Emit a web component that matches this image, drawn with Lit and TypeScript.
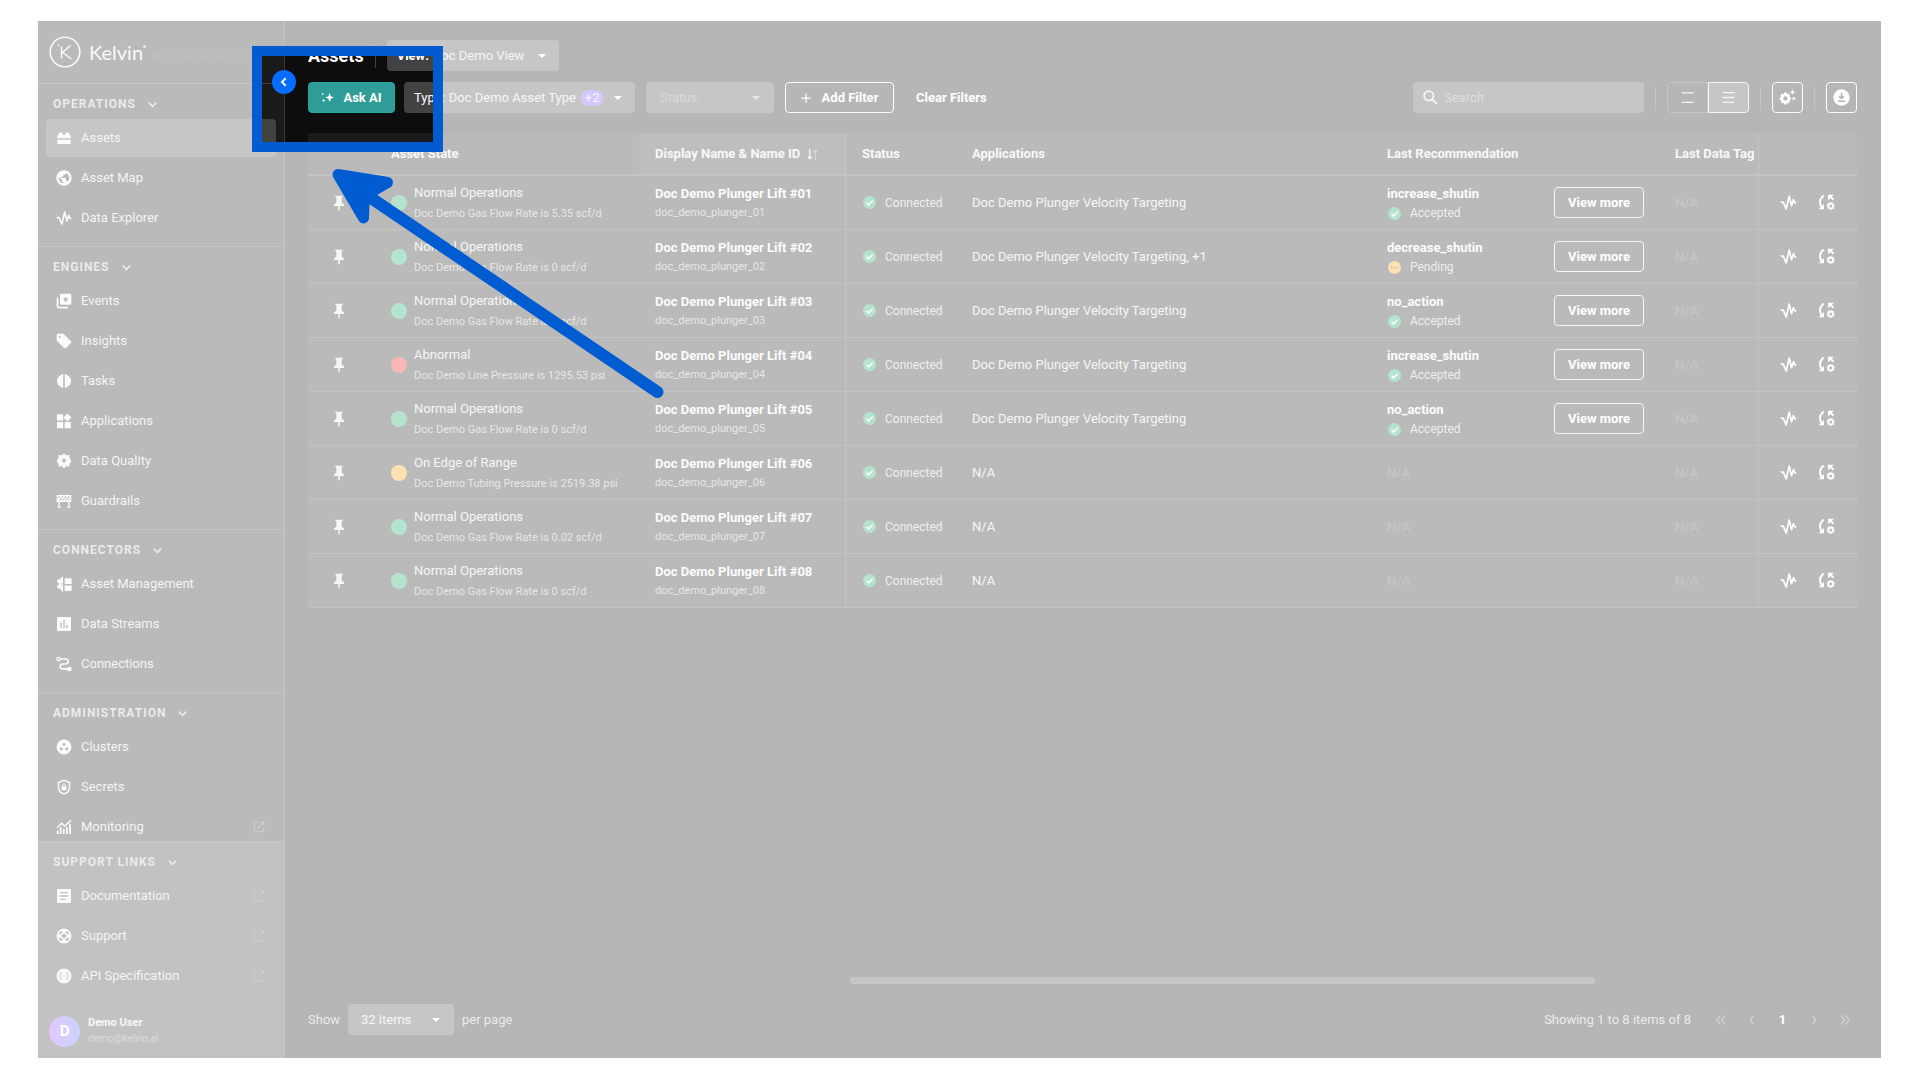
import { LitElement, html, css, svg, nothing } from "lit";
import { customElement, property, state } from "lit/decorators.js";
import { classMap } from "lit/directives/class-map.js";

const star = "l1.2 2.5 2.8.4-2 2 .5 2.8-2.5-1.3-2.5 1.3.5-2.8-2-2 2.8-.4z";

const icons: Record<string, unknown> = {
  brick: svg`<path d="M2 12.300V8.500a1 1 0 0 1 1-1h1V5a1 1 0 0 1 1-1h4a1 1 0 0 1 1 1v2.500h4V5a1 1 0 0 1 1-1h4a1 1 0 0 1 1 1v2.500h1a1 1 0 0 1 1 1v3.800zM2 14.500h20v5.500a1 1 0 0 1-1 1H3a1 1 0 0 1-1-1z"/>`,
  globe: svg`<path d="M17.900 17.390c-.26-.8-1.010-1.390-1.900-1.390h-1v-3a1 1 0 0 0-1-1H8v-2h2a1 1 0 0 0 1-1V7h2a2 2 0 0 0 2-2v-.41a7.984 7.984 0 0 1 2.900 12.800M11 19.930c-3.950-.49-7-3.850-7-7.930 0-.62.08-1.220.21-1.790L9 15v1a2 2 0 0 0 2 2M12 .5A11.500 11.500 0 0 0 .5 12a11.500 11.500 0 0 0 11.500 11.500A11.500 11.500 0 0 0 23.500 12 11.500 11.500 0 0 0 12 .5z"/>`,
  wave: svg`<path d="M1 11.500h3.500L8.800 21 13 3l3.300 13.500L19 8l2 4.500h2" fill="none" stroke="currentColor" stroke-width="2.400" stroke-linejoin="round"/>`,
  events: svg`<path d="M8 1h13a2 2 0 0 1 2 2v12.500a2 2 0 0 1-2 2H8a2 2 0 0 1-2-2V3a2 2 0 0 1 2-2zm6.500 4.500${star}" fill-rule="evenodd"/><path d="M2.300 7v12.500a2.500 2.500 0 0 0 2.500 2.500H18" fill="none" stroke="currentColor" stroke-width="2.600"/>`,
  tag: svg`<path d="M5.500 7A1.500 1.500 0 0 1 4 5.500 1.500 1.500 0 0 1 5.500 4 1.500 1.500 0 0 1 7 5.500 1.500 1.500 0 0 1 5.500 7m16.900 5.500-10.500-10.500C11.500 1.300 11 1 10.400 1H3C1.900 1 1 1.900 1 3v7.400c0 .6.200 1.100.6 1.500l10.500 10.500c.8.800 2 .8 2.800 0l7.500-7.400c.8-.8.8-1.900 0-2.500z"/>`,
  tasks: svg`<path d="M10.800 1.500v21L7.500 21.500 3.500 18 1.500 14V10l2-4 4-3.500zM13.200 1.500v21l3.300-1 4-3.500 2-4V10l-2-4-4-3.500z"/>`,
  widgets: svg`<path d="M13 13.500v9.300h9.300v-9.300zM1.500 22.800h9.300v-9.300H1.500zM1.500 2v9.300h9.300V2zM17.200.8 11.200 6.800l6 6 6-6z"/>`,
  quality: svg`<path d="M12 .8l3.300 2.700 4.600-.6.600 4.500L23.300 12l-2.800 3.700-.6 4.500-4.600-.6L12 23.200l-3.300-3.600-4.600.6-.6-4.500L.8 12l2.700-4.600.6-4.500 4.600.6zM12 7${star}" fill-rule="evenodd" stroke-linejoin="round"/>`,
  barrier: svg`<path d="M1 3h22v10.500H1zM4 11.500h1.500l6-6.500H9.500zM8.500 11.500H10l6-6.500h-2zM13 11.500h1.500l6-6.500h-2zM2.500 9l3.500-4H3.500L2.500 6.500zM18 11.500h1.500L21.500 9V7.200z" fill-rule="evenodd"/><path d="M4.500 13v8M19.500 13v8M2.500 21.300h4.500M17 21.300h4.500" stroke="currentColor" stroke-width="2"/>`,
  management: svg`<path d="M10.500 1v22.500L7.500 22.500 7 18.800 3.500 19.500 1 15.500 4 13.500v-3L1 8.500l2.500-4L7 5.200 7.500 2zM8.500 9.500a3 3 0 0 0 0 5z" fill-rule="evenodd"/><path d="M13 12V4.500L15 2.500h2v2h2v-2h2l2.500 2V12zM13 14.300h10.500V21a1.500 1.500 0 0 1-1.500 1.500h-9z"/>`,
  poll: svg`<path d="M20.500 1.500h-17c-1.100 0-2 .9-2 2v17c0 1.100.9 2 2 2h17c1.100 0 2-.9 2-2v-17c0-1.100-.9-2-2-2zM8.500 18h-2v-8h2zm4.500 0h-2V6h2zm4.500 0h-2v-4.500h2z"/>`,
  route: svg`<circle cx="4" cy="4.500" r="2.500" fill="none" stroke="currentColor" stroke-width="2"/><circle cx="20" cy="19.500" r="3.500"/><path d="M7 4.500h7.500a3.700 3.700 0 0 1 0 7.400H10a3.700 3.700 0 0 0 0 7.400h7" fill="none" stroke="currentColor" stroke-width="2.400"/>`,
  clusters: svg`<path d="M12 .8A11.200 11.200 0 1 0 12 23.200 11.200 11.200 0 1 0 12 .8zM12 6a2.200 2.200 0 1 1 0 4.400A2.200 2.200 0 1 1 12 6zM8 12.800a2.200 2.200 0 1 1 0 4.400 2.200 2.200 0 1 1 0-4.400zm8 0a2.200 2.200 0 1 1 0 4.400 2.200 2.200 0 1 1 0-4.400z" fill-rule="evenodd"/>`,
  shield: svg`<path d="M12 2 3.800 5.200V12c0 5 3.400 9 8.200 10.300 4.800-1.300 8.200-5.300 8.200-10.300V5.200z" fill="none" stroke="currentColor" stroke-width="2.200" stroke-linejoin="round"/><path d="M8.500 10.800h7v6h-7z"/><path d="M10 11V9.300a2 2 0 0 1 4 0V11" fill="none" stroke="currentColor" stroke-width="1.500"/>`,
  monitoring: svg`<path d="M1.500 13 8.500 6.500l4.500 4L22.500 2" fill="none" stroke="currentColor" stroke-width="2.200"/><path d="M2.500 22.500v-5M7 22.500V12M11.700 22.500V15M16.300 22.500V12M21 22.500V7" stroke="currentColor" stroke-width="2.600"/>`,
  article: svg`<path d="M20.500 1.500h-17c-1.100 0-2 .9-2 2v17c0 1.100.9 2 2 2h17c1.100 0 2-.9 2-2v-17c0-1.100-.9-2-2-2zM14 18H6v-2h8zm4-5H6v-2h12zm0-5H6V6h12z"/>`,
  support: svg`<path d="M12 .8A11.200 11.200 0 1 0 12 23.200 11.200 11.200 0 1 0 12 .8zM12 8.500a3.500 3.500 0 1 1 0 7 3.500 3.500 0 1 1 0-7zM9.300 3.600v3.600A6 6 0 0 0 7.200 9.300H3.600a9 9 0 0 1 5.700-5.700zm5.400 0a9 9 0 0 1 5.700 5.700h-3.600a6 6 0 0 0-2.100-2.100zM3.600 14.700h3.600a6 6 0 0 0 2.100 2.100v3.600a9 9 0 0 1-5.700-5.700zm13.200 0h3.600a9 9 0 0 1-5.700 5.700v-3.600a6 6 0 0 0 2.100-2.100z" fill-rule="evenodd"/>`,
  api: svg`<circle cx="12" cy="12" r="11.200"/><path class="ink" d="M8.500 6.500C6 6.500 7.500 11 4.800 12c2.700 1 1.200 5.500 3.700 5.500M15.500 6.500c2.500 0 1 4.500 3.700 5.500-2.700 1-1.200 5.500-3.700 5.500M8.500 12h1.500M11.300 12h1.500M14.100 12h1.500" fill="none" stroke-width="1.500"/>`,
  external: svg`<path d="M20.500 20.500h-17v-17h7v-2h-7a2 2 0 0 0-2 2v17a2 2 0 0 0 2 2h17c1.100 0 2-.9 2-2v-7h-2zM14 1.500v2h5L8 14.500l1.400 1.400L20.500 5v5h2V1.500z"/>`,
  pin: svg`<path d="M16 11.500V3.500h1.500V1h-11v2.500H8v8L4.500 14v2.500h6.300V23h2.400v-6.500h6.300V14z"/>`,
  down: svg`<path d="M2 7l10 10L22 7" fill="none" stroke="currentColor" stroke-width="4"/>`,
  left: svg`<path d="M16 3 7 12l9 9" fill="none" stroke="currentColor" stroke-width="4.500"/>`,
  caret: svg`<path d="M0 6h24L12 18z"/>`,
  check: svg`<path d="M12 0a12 12 0 1 0 0 24 12 12 0 1 0 0-24z"/><path d="M6.500 12.500l3.800 3.800 7.400-7.400" fill="none" stroke="#fff" stroke-width="2.800"/>`,
  dots: svg`<path d="M12 0a12 12 0 1 0 0 24 12 12 0 1 0 0-24z"/><path d="M5 12h3M10.500 12h3M16 12h3" stroke="#333" stroke-width="2.600"/>`,
  search: svg`<path d="M14.800 14.800 22.500 22.500M16.800 9.300a7.500 7.500 0 1 1-15 0 7.500 7.500 0 0 1 15 0z" fill="none" stroke="currentColor" stroke-width="2.800"/>`,
  plus: svg`<path d="M12 1v22M1 12h22" stroke="currentColor" stroke-width="3"/>`,
  sparkle: svg`<path d="M16 3.500l2.300 6.200 5.700 2.300-5.700 2.300L16 20.500l-2.300-6.200L8 12l5.700-2.300zM5 14l1 2.500 2.500 1-2.500 1L5 21l-1-2.500-2.500-1 2.500-1zM3 3l.8 1.700 1.700.8-1.700.8L3 8l-.8-1.700L.5 5.500l1.700-.8z"/>`,
  sort: svg`<path d="M7 2v17M3.500 16 7 20l3.500-4" fill="none" stroke="currentColor" stroke-width="2.400"/><path d="M17.500 22V5M14 8l3.500-4L21 8" fill="none" stroke="currentColor" stroke-width="2" opacity=".4"/>`,
  two: svg`<path d="M1 3.500h22M1 21h22" stroke="currentColor" stroke-width="2.500"/>`,
  three: svg`<path d="M1 3h22M1 12h22M1 21h22" stroke="currentColor" stroke-width="2.500"/>`,
  gear: svg`<path d="M7.500 5h3l.8 2.300 2.200-.8 2 2.200-.9 2.200 2.200 1v3l-2.200 1 .9 2.200-2 2.200-2.200-.8-.8 2.300h-3l-.8-2.300-2.200.8-2-2.200.9-2.200L1 15v-3l1.900-1-.9-2.200 2-2.200 2.200.8zM9 10.300a3 3 0 1 0 0 6 3 3 0 1 0 0-6z" fill-rule="evenodd"/><path d="M19 .5l1.200 2.900 2.800 1.100-2.800 1.200L19 8.500l-1.200-2.800L15 4.500l2.800-1.100zM21 10.500l.9 2 2.100.9-2.100.9-.9 2.200-.9-2.200-2.100-.9 2.100-.9z"/>`,
  download: svg`<circle cx="12" cy="12" r="11.500"/><path class="ink" d="M12 5.500V13M8.500 10l3.500 3.500 3.500-3.500M7 17.300h10" fill="none" stroke-width="2.200"/>`,
  control: svg`<path d="M8 2C2.500 6.500 1.500 12.500 5 18.500" fill="none" stroke="currentColor" stroke-width="2.600"/><path d="M1 21.500h7.500V14z"/><path d="M14 1h8.500l-3 2.800 3.300 3.200-2 2-3.300-3.300L14.500 9z"/><path d="M18 10.800l1.500 2 2.500-.3.200 2.500 1.800 1.500-1.600 1.800V21l-2.500-.2-1.900 2.200-1.800-2.200-2.400.2-.2-2.500L12 16.700l1.600-1.700.2-2.500 2.500.3zM18 14.700a2.200 2.200 0 1 0 0 4.400 2.200 2.200 0 1 0 0-4.400z" fill-rule="evenodd"/>`,
};

const icon = (name: string, cls = "") =>
  html`<svg class="icon ${cls}" viewBox="0 0 24 24" fill="currentColor" aria-hidden="true">${icons[name]}</svg>`;

type NavItem = { label: string; icon: string; external?: boolean };
type NavGroup = { title: string; items: NavItem[] };

const groups: NavGroup[] = [
  {
    title: "OPERATIONS",
    items: [
      { label: "Assets", icon: "brick" },
      { label: "Asset Map", icon: "globe" },
      { label: "Data Explorer", icon: "wave" },
    ],
  },
  {
    title: "ENGINES",
    items: [
      { label: "Events", icon: "events" },
      { label: "Insights", icon: "tag" },
      { label: "Tasks", icon: "tasks" },
      { label: "Applications", icon: "widgets" },
      { label: "Data Quality", icon: "quality" },
      { label: "Guardrails", icon: "barrier" },
    ],
  },
  {
    title: "CONNECTORS",
    items: [
      { label: "Asset Management", icon: "management" },
      { label: "Data Streams", icon: "poll" },
      { label: "Connections", icon: "route" },
    ],
  },
  {
    title: "ADMINISTRATION",
    items: [
      { label: "Clusters", icon: "clusters" },
      { label: "Secrets", icon: "shield" },
      { label: "Monitoring", icon: "monitoring", external: true },
    ],
  },
];

const supportGroup: NavGroup = {
  title: "SUPPORT LINKS",
  items: [
    { label: "Documentation", icon: "article", external: true },
    { label: "Support", icon: "support", external: true },
    { label: "API Specification", icon: "api", external: true },
  ],
};

type Asset = {
  level: "ok" | "bad" | "edge";
  state: string;
  detail: string;
  apps: string;
  action?: string;
  result?: "Accepted" | "Pending";
};

const targeting = "Doc Demo Plunger Velocity Targeting";
const assets: Asset[] = [
  { level: "ok", state: "Normal Operations", detail: "Doc Demo Gas Flow Rate is 5.35 scf/d", apps: targeting, action: "increase_shutin", result: "Accepted" },
  { level: "ok", state: "Normal Operations", detail: "Doc Demo Gas Flow Rate is 0 scf/d", apps: `${targeting}, +1`, action: "decrease_shutin", result: "Pending" },
  { level: "ok", state: "Normal Operations", detail: "Doc Demo Gas Flow Rate is 0 scf/d", apps: targeting, action: "no_action", result: "Accepted" },
  { level: "bad", state: "Abnormal", detail: "Doc Demo Line Pressure is 1295.53 psi", apps: targeting, action: "increase_shutin", result: "Accepted" },
  { level: "ok", state: "Normal Operations", detail: "Doc Demo Gas Flow Rate is 0 scf/d", apps: targeting, action: "no_action", result: "Accepted" },
  { level: "edge", state: "On Edge of Range", detail: "Doc Demo Tubing Pressure is 2519.38 psi", apps: "N/A" },
  { level: "ok", state: "Normal Operations", detail: "Doc Demo Gas Flow Rate is 0.02 scf/d", apps: "N/A" },
  { level: "ok", state: "Normal Operations", detail: "Doc Demo Gas Flow Rate is 0 scf/d", apps: "N/A" },
];

const shared = css`
  * {
    box-sizing: border-box;
  }
  .icon {
    width: 16px;
    height: 16px;
    flex: none;
    display: block;
  }
  button,
  select,
  input {
    font: inherit;
    color: inherit;
    margin: 0;
    padding: 0;
    border: 0;
    background: none;
    outline: none;
  }
  button {
    display: inline-flex;
    align-items: center;
    justify-content: center;
    cursor: pointer;
    white-space: nowrap;
  }
  a {
    color: inherit;
    text-decoration: none;
  }
`;

@customElement("side-bar")
class SideBar extends LitElement {
  static styles = [
    shared,
    css`
      :host {
        position: relative;
        display: flex;
        flex-direction: column;
        flex: none;
        width: 247px;
        background: #1a1a1a;
        border-right: 1px solid #3a3a3a;
        color: #dcdcdc;
      }
      .brand {
        display: flex;
        align-items: center;
        flex: none;
        height: 63px;
        padding-left: 11px;
        border-bottom: 1px solid #404040;
      }
      .mark {
        width: 32px;
        height: 32px;
        margin-right: 8px;
      }
      .wordmark {
        font-family: Lato, sans-serif;
        font-size: 20px;
        line-height: 32px;
        color: #e8e8e8;
      }
      .ring {
        width: 3px;
        height: 3px;
        margin-bottom: 12px;
        border-radius: 50%;
        background: #c0c0c0;
      }
      .env {
        margin: 9px 0 0 5px;
        font-size: 10px;
        line-height: 12px;
        color: #2b2b2b;
        white-space: nowrap;
      }
      .collapse {
        position: absolute;
        top: 49px;
        right: -12px;
        z-index: 1;
        width: 24px;
        height: 24px;
        border-radius: 50%;
        background: #086cff;
        color: #fff;
      }
      .collapse .icon {
        width: 10px;
        height: 10px;
      }
      nav {
        flex: 1;
        min-height: 0;
        overflow: hidden;
      }
      .group {
        padding: 8px 8px 9px;
        border-bottom: 1px solid #3a3a3a;
      }
      .heading {
        height: 24px;
        margin: 0 0 3px;
        padding-left: 7px;
        font-size: 12px;
        line-height: 24px;
        font-weight: 700;
      }
      .heading button {
        gap: 12px;
        letter-spacing: 1px;
        color: #bdbdbd;
      }
      .heading .icon {
        width: 9px;
        height: 9px;
      }
      ul {
        display: flex;
        flex-direction: column;
        gap: 2px;
        list-style: none;
        margin: 0;
        padding: 0;
      }
      .link {
        display: flex;
        align-items: center;
        gap: 9px;
        height: 38px;
        padding: 0 11px 0 10px;
        border-radius: 4px;
      }
      .link .icon {
        color: #f2f2f2;
      }
      .link .ink {
        stroke: #333;
      }
      .link.current {
        background: #424242;
      }
      .link span {
        flex: 1;
      }
      .link .out {
        width: 12px;
        height: 12px;
        color: #606060;
      }
      footer {
        flex: none;
        background: #343434;
        border-top: 1px solid #404040;
      }
      footer .group {
        padding-bottom: 8px;
        border-color: #404040;
      }
      .user {
        display: flex;
        align-items: center;
        gap: 8px;
        height: 54px;
        padding-left: 11px;
      }
      .avatar {
        display: grid;
        place-items: center;
        width: 31px;
        height: 31px;
        border-radius: 50%;
        background: linear-gradient(90deg, #9b45f8, #4a6fff);
        color: #fff;
        font-size: 15px;
        font-weight: 700;
      }
      .who {
        font-size: 11px;
        line-height: 16px;
      }
      .who strong {
        display: block;
        color: #e6e6e6;
      }
      .who small {
        display: block;
        font-size: 10px;
        color: #8c8c8c;
      }
    `,
  ];

  @property() current = "Assets";

  private renderGroup(group: NavGroup) {
    return html`<section class="group">
      <h2 class="heading"><button type="button" aria-expanded="true">${group.title}${icon("down")}</button></h2>
      <ul>
        ${group.items.map(
          (item) => html`<li>
            <a
              href="#"
              class=${classMap({ link: true, current: item.label === this.current })}
              aria-current=${item.label === this.current ? "page" : nothing}
              >${icon(item.icon)}<span>${item.label}</span>${item.external ? icon("external", "out") : nothing}</a
            >
          </li>`,
        )}
      </ul>
    </section>`;
  }

  render() {
    return html`
      <div class="brand">
        <svg class="mark" viewBox="0 0 32 32" fill="none" stroke="#e8e8e8" aria-hidden="true">
          <circle cx="16" cy="16" r="14.800" stroke-width="1.600" />
          <path d="M12.500 10.500v12M21.500 9.500l-8 7 9 6.500" stroke-width="1.500" />
          <circle cx="9.300" cy="9.300" r=".7" stroke-width="1" />
        </svg>
        <span class="wordmark">Kelvin</span><i class="ring"></i>
        <span class="env">BETA Environment (DEV)</span>
      </div>
      <button class="collapse" type="button" aria-label="Collapse menu">${icon("left")}</button>
      <nav aria-label="Main">${groups.map((g) => this.renderGroup(g))}</nav>
      <footer>
        ${this.renderGroup(supportGroup)}
        <div class="user">
          <span class="avatar">D</span>
          <div class="who"><strong>Demo User</strong><small>demo@kelvin.ai</small></div>
        </div>
      </footer>
    `;
  }
}

@customElement("asset-table")
class AssetTable extends LitElement {
  static styles = [
    shared,
    css`
      :host {
        display: block;
      }
      table {
        width: 100%;
        table-layout: fixed;
        border-collapse: separate;
        border-spacing: 0;
        background: #1a1a1a;
        color: #e0e0e0;
        font-size: 13px;
        line-height: 18px;
      }
      .c-pin {
        width: 67px;
      }
      .c-state {
        width: 264px;
      }
      .c-name {
        width: 207px;
      }
      .c-status {
        width: 110px;
      }
      .c-rec {
        width: 288px;
      }
      .c-tag {
        width: 99px;
      }
      .c-act {
        width: 99px;
      }
      th,
      td {
        padding: 0 0 0 16px;
        border-bottom: 1px solid #3a3a3a;
        text-align: left;
        white-space: nowrap;
        overflow: hidden;
      }
      th {
        height: 43px;
        padding-top: 1px;
        border-bottom: 2px solid #363636;
        font-weight: 700;
        color: #e8e8e8;
      }
      td {
        height: 54px;
      }
      .sorted {
        background: #272727;
      }
      .sorted button {
        gap: 6px;
        font-weight: 700;
      }
      .sorted .icon {
        width: 13px;
        height: 13px;
      }
      .name {
        border-right: 1px solid #3a3a3a;
      }
      .act {
        border-left: 1px solid #3a3a3a;
        color: #fff;
      }
      .row {
        display: flex;
        align-items: center;
      }
      .pin {
        padding-left: 23px;
      }
      .pin button {
        display: flex;
      }
      .dot {
        flex: none;
        width: 16px;
        height: 16px;
        margin-right: 7px;
        border-radius: 50%;
      }
      .dot.ok {
        background: #04a45a;
      }
      .dot.bad {
        background: #e8120a;
      }
      .dot.edge {
        background: #fa9a00;
      }
      .stack {
        display: flex;
        flex-direction: column;
        gap: 3px;
        padding-top: 2px;
      }
      .stack small {
        font-size: 11px;
        color: #b0b0b0;
      }
      .tight {
        gap: 1px;
      }
      strong {
        color: #f4f4f4;
      }
      .badge {
        display: flex;
        align-items: center;
        gap: 9px;
        padding-left: 1px;
        font-size: 12px;
        color: #cccccc;
      }
      .badge .icon {
        width: 13px;
        height: 13px;
        color: #04a45a;
      }
      .badge.pending .icon {
        color: #fa9a00;
      }
      .rec {
        justify-content: space-between;
        padding-right: 15px;
      }
      .more {
        width: 90px;
        height: 31px;
        border: 1px solid #e0e0e0;
        border-radius: 4px;
        color: #fff;
        font-weight: 700;
      }
      .none {
        color: #474747;
      }
      .act .row {
        gap: 21px;
        padding-left: 5px;
      }
      .act .icon {
        width: 17px;
        height: 17px;
      }
    `,
  ];

  private renderRow(a: Asset, i: number) {
    const n = String(i + 1).padStart(2, "0");
    return html`<tr>
      <td class="pin"><button type="button" aria-label="Pin asset">${icon("pin")}</button></td>
      <td>
        <div class="row">
          <span class="dot ${a.level}"></span>
          <div class="stack"><span>${a.state}</span><small>${a.detail}</small></div>
        </div>
      </td>
      <td class="name">
        <div class="stack tight"><strong>Doc Demo Plunger Lift #${n}</strong><small>doc_demo_plunger_${n}</small></div>
      </td>
      <td><span class="badge">${icon("check")}Connected</span></td>
      <td>${a.apps}</td>
      <td>
        ${a.action
          ? html`<div class="row rec">
              <div class="stack tight">
                <strong>${a.action}</strong>
                <span class=${classMap({ badge: true, pending: a.result === "Pending" })}
                  >${icon(a.result === "Pending" ? "dots" : "check")}${a.result}</span
                >
              </div>
              <button class="more" type="button">View more</button>
            </div>`
          : html`<span class="none">N/A</span>`}
      </td>
      <td><span class="none">N/A</span></td>
      <td class="act">
        <div class="row">
          <button type="button" aria-label="Open in Data Explorer">${icon("wave")}</button>
          <button type="button" aria-label="Control change">${icon("control")}</button>
        </div>
      </td>
    </tr>`;
  }

  render() {
    return html`<table>
      <colgroup>
        <col class="c-pin" />
        <col class="c-state" />
        <col class="c-name" />
        <col class="c-status" />
        <col />
        <col class="c-rec" />
        <col class="c-tag" />
        <col class="c-act" />
      </colgroup>
      <thead>
        <tr>
          <th></th>
          <th>Asset State</th>
          <th class="name sorted" aria-sort="ascending">
            <button type="button">Display Name &amp; Name ID${icon("sort")}</button>
          </th>
          <th>Status</th>
          <th>Applications</th>
          <th>Last Recommendation</th>
          <th>Last Data Tag</th>
          <th class="act"></th>
        </tr>
      </thead>
      <tbody>
        ${assets.map((a, i) => this.renderRow(a, i))}
      </tbody>
    </table>`;
  }
}

@customElement("app-root")
class AppRoot extends LitElement {
  static styles = [
    shared,
    css`
      :host {
        height: 100vh;
        box-sizing: border-box;
        padding: 21px 39px 22px 38px;
        background: #fff;
        font-family: Roboto, sans-serif;
        font-size: 13px;
        line-height: 18px;
        display: flex;
      }
      .window {
        position: relative;
        display: flex;
        flex: 1;
        min-width: 0;
        overflow: hidden;
        background: #0d0d0d;
        color: #e0e0e0;
      }
      main {
        display: flex;
        flex-direction: column;
        flex: 1;
        min-width: 0;
        padding: 19px 24px 23px 23px;
      }
      .bar {
        display: flex;
        align-items: center;
        height: 31px;
      }
      .title {
        margin-bottom: 11px;
      }
      h1 {
        margin: 0;
        font-size: 18px;
        font-weight: 700;
        color: #fff;
      }
      .rule {
        width: 1px;
        height: 24px;
        margin: 0 11px;
        background: #424242;
      }
      .field {
        display: flex;
        align-items: center;
        gap: 4px;
        height: 31px;
        padding: 0 13px 0 10px;
        border-radius: 4px;
        background: #424242;
      }
      .field label {
        color: #fff;
      }
      .field select {
        appearance: none;
        cursor: pointer;
      }
      .field .icon {
        width: 8px;
        height: 8px;
        margin-left: auto;
        color: #fff;
      }
      .view label {
        font-weight: 700;
      }
      .filters {
        margin-bottom: 20px;
      }
      .ask {
        gap: 9px;
        width: 87px;
        height: 31px;
        margin-right: 9px;
        border: 1px solid #23aaa2;
        border-radius: 4px;
        background: #2f9c98;
        color: #fff;
        font-weight: 700;
      }
      .ask .icon {
        width: 13px;
        height: 13px;
      }
      .type {
        width: 231px;
      }
      .count {
        padding: 0 4px;
        border-radius: 8px;
        line-height: 16px;
        background: #7648ff;
      }
      .status {
        width: 128px;
        margin-left: 11px;
        padding: 0 14px;
        color: #808080;
      }
      .status .icon {
        color: #b0b0b0;
      }
      .status select {
        flex: 1;
      }
      .view {
        width: 172px;
      }
      .add {
        gap: 11px;
        width: 109px;
        height: 31px;
        margin-left: 11px;
        border: 1px solid #f0f0f0;
        border-radius: 4px;
        color: #fff;
        font-weight: 700;
      }
      .add .icon {
        width: 10px;
        height: 10px;
      }
      .clear {
        margin: 0 auto 0 22px;
        color: #fff;
        font-weight: 700;
      }
      .search {
        display: flex;
        align-items: center;
        gap: 6px;
        width: 231px;
        height: 31px;
        padding: 0 10px;
        border-radius: 4px;
        background: #424242;
      }
      .search .icon {
        width: 15px;
        height: 15px;
      }
      .search input {
        flex: 1;
        min-width: 0;
      }
      .search input::placeholder {
        color: #909090;
        opacity: 1;
      }
      .toggle {
        display: flex;
      }
      .toggle button {
        width: 41px;
        height: 31px;
        border: 1px solid #424242;
        border-radius: 4px 0 0 4px;
      }
      .toggle .on {
        border-color: #e0e0e0;
        border-radius: 0 4px 4px 0;
        background: #424242;
      }
      .toggle .icon {
        width: 13px;
        height: 13px;
      }
      .square {
        width: 31px;
        height: 31px;
        border: 1px solid #f0f0f0;
        border-radius: 4px;
        color: #fff;
      }
      .square .icon {
        width: 17px;
        height: 17px;
      }
      .square .ink {
        stroke: #0d0d0d;
      }
      .track {
        margin: auto 99px 20px 542px;
      }
      .thumb {
        width: 82%;
        height: 7px;
        border-radius: 4px;
        background: #424242;
      }
      .foot {
        color: #bdbdbd;
      }
      .foot label {
        width: 33px;
      }
      .pages {
        width: 106px;
        margin: 0 8px 0 7px;
        padding: 0 14px 0 13px;
        color: #e0e0e0;
      }
      .shown {
        margin: 0 14px 0 auto;
      }
      .pager {
        display: flex;
        margin-right: -3px;
      }
      .pager button {
        width: 31px;
        height: 31px;
        color: #7a7a7a;
      }
      .pager .here {
        color: #fff;
        font-weight: 700;
      }
      .pager svg {
        width: 12px;
        height: 12px;
      }
      .spotlight {
        position: absolute;
        left: 214px;
        top: 25px;
        z-index: 2;
        width: 191px;
        height: 106px;
        border: 10px solid #005cd0;
        box-shadow: 0 0 0 4000px rgba(255, 255, 255, 0.7);
        pointer-events: none;
      }
      .pointer {
        position: absolute;
        left: 282px;
        top: 139px;
        z-index: 3;
        width: 360px;
        height: 250px;
        pointer-events: none;
      }
    `,
  ];

  @state() private query = "";

  private chevrons(d: string) {
    return html`<svg viewBox="0 0 24 24" fill="none" stroke="currentColor" stroke-width="2.400" aria-hidden="true">
      <path d=${d} />
    </svg>`;
  }

  render() {
    return html`
      <div class="window">
        <side-bar></side-bar>
        <main>
          <div class="bar title">
            <h1>Assets</h1>
            <span class="rule"></span>
            <div class="field view">
              <label for="view">View:</label>
              <select id="view">
                <option>Doc Demo View</option>
              </select>
              ${icon("caret")}
            </div>
          </div>
          <div class="bar filters">
            <button class="ask" type="button">${icon("sparkle")}Ask AI</button>
            <div class="field type">
              <label for="type">Type:</label>
              <select id="type">
                <option>Doc Demo Asset Type</option>
              </select>
              <span class="count">+2</span>
              ${icon("caret")}
            </div>
            <div class="field status">
              <select aria-label="Status">
                <option>Status</option>
              </select>
              ${icon("caret")}
            </div>
            <button class="add" type="button">${icon("plus")}Add Filter</button>
            <button class="clear" type="button">Clear Filters</button>
            <div class="search">
              ${icon("search")}
              <input
                type="search"
                placeholder="Search"
                aria-label="Search"
                .value=${this.query}
                @input=${(e: Event) => (this.query = (e.target as HTMLInputElement).value)}
              />
            </div>
            <span class="rule"></span>
            <div class="toggle">
              <button type="button" aria-label="Comfortable rows">${icon("two")}</button>
              <button class="on" type="button" aria-label="Compact rows">${icon("three")}</button>
            </div>
            <span class="rule"></span>
            <button class="square" type="button" aria-label="Table settings">${icon("gear")}</button>
            <span class="rule"></span>
            <button class="square" type="button" aria-label="Download">${icon("download")}</button>
          </div>
          <asset-table></asset-table>
          <div class="track"><div class="thumb"></div></div>
          <div class="bar foot">
            <label for="pages">Show</label>
            <div class="field pages">
              <select id="pages">
                <option>32 items</option>
              </select>
              ${icon("caret")}
            </div>
            <span>per page</span>
            <span class="shown">Showing 1 to 8 items of 8</span>
            <div class="pager">
              <button type="button" aria-label="First page">${this.chevrons("M11 3 4 12l7 9M20 3l-7 9 7 9")}</button>
              <button type="button" aria-label="Previous page">${this.chevrons("M15 3l-6 9 6 9")}</button>
              <button class="here" type="button">1</button>
              <button type="button" aria-label="Next page">${this.chevrons("M9 3l6 9-6 9")}</button>
              <button type="button" aria-label="Last page">${this.chevrons("M4 3l7 9-7 9M13 3l7 9-7 9")}</button>
            </div>
          </div>
        </main>
        <div class="spotlight"></div>
        <svg class="pointer" viewBox="320 160 360 250" fill="none" stroke="#005cd0" aria-hidden="true">
          <path d="M374 200 657.500 392" stroke-width="12" stroke-linecap="round" />
          <path
            d="M338 174.500 387.500 182.500 373 191 364 203 363.500 218z"
            fill="#005cd0"
            stroke-width="11"
            stroke-linejoin="round"
          />
        </svg>
      </div>
    `;
  }
}
